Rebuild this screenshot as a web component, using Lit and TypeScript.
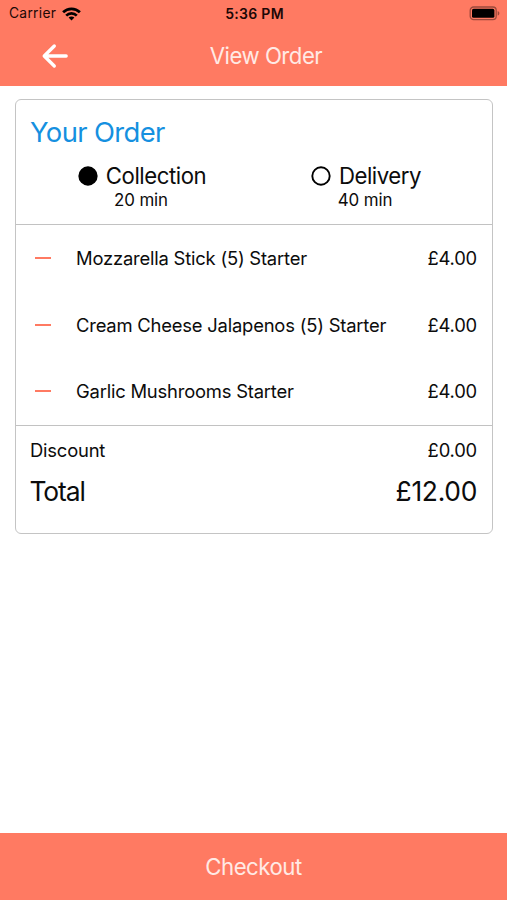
import { LitElement, html, css } from "lit";
import { customElement, property } from "lit/decorators.js";

interface OrderItem {
  name: string;
  price: string;
}

@customElement("status-bar")
class StatusBar extends LitElement {
  static styles = css`
    :host {
      display: grid;
      grid-template-columns: 1fr auto 1fr;
      align-items: center;
      height: 27px;
      padding: 0 7px 0 9px;
      color: #1c0806;
      font-size: 13.8px;
      line-height: 27px;
    }
    .left {
      display: flex;
      align-items: center;
      gap: 6px;
      letter-spacing: 0.28px;
    }
    .time {
      font-weight: 600;
      font-size: 14px;
      letter-spacing: 0.3px;
    }
    .battery {
      justify-self: end;
    }
    svg {
      display: block;
    }
  `;
  render() {
    return html`
      <div class="left">
        <span>Carrier</span>
        <svg width="19" height="14" viewBox="0 0 19 14">
          <g fill="none" stroke="#000" stroke-width="2.7">
            <path d="M1.1 5.3 C5.8 0.6 13.2 0.6 17.9 5.3" />
            <path d="M4.2 8.6 C7.2 5.7 11.8 5.7 14.8 8.6" />
          </g>
          <path d="M9.5 13.4 L6.6 10.5 C8.2 9 10.8 9 12.4 10.5 Z" fill="#000" />
        </svg>
      </div>
      <span class="time">5:36 PM</span>
      <svg class="battery" width="31" height="15" viewBox="0 0 31 15">
        <rect x="1.2" y="1" width="26" height="12.6" rx="3.4" fill="none" stroke="#9c4a3c" stroke-width="1.3" />
        <rect x="3" y="2.8" width="22.4" height="9" rx="1.6" fill="#000" />
        <path d="M28.7 5 C30.9 5.9 30.9 8.7 28.7 9.6 Z" fill="#9c4a3c" />
      </svg>
    `;
  }
}

@customElement("pickup-option")
class PickupOption extends LitElement {
  @property() label = "";
  @property() eta = "";
  @property({ type: Boolean }) selected = false;

  static styles = css`
    :host {
      display: flex;
      flex-direction: column;
      align-items: center;
    }
    .choice {
      display: flex;
      align-items: center;
      gap: 8px;
      font-size: 22.2px;
      line-height: 28px;
      letter-spacing: -0.45px;
    }
    svg {
      display: block;
    }
    .eta {
      padding-right: 2px;
      font-size: 16.9px;
      line-height: 20px;
      letter-spacing: -0.1px;
    }
  `;
  render() {
    return html`
      <div class="choice">
        <svg width="20" height="20" viewBox="0 0 20 20">
          <circle cx="10" cy="10" r="8.7" fill=${this.selected ? "#000" : "none"} stroke="#000" stroke-width="1.9" />
        </svg>
        <span>${this.label}</span>
      </div>
      <span class="eta">${this.eta}</span>
    `;
  }
}

@customElement("app-root")
class AppRoot extends LitElement {
  private items: OrderItem[] = [
    { name: "Mozzarella Stick (5) Starter", price: "£4.00" },
    { name: "Cream Cheese Jalapenos (5) Starter", price: "£4.00" },
    { name: "Garlic Mushrooms Starter", price: "£4.00" },
  ];

  static styles = css`
    :host {
      display: flex;
      flex-direction: column;
      box-sizing: border-box;
      width: 100%;
      height: 900px;
      background: #fff;
      color: #0c0c0c;
      font-family: Inter, "Liberation Sans", sans-serif;
    }
    header {
      flex: none;
      height: 86px;
      background: #ff7a62;
    }
    .nav {
      display: grid;
      grid-template-columns: 1fr auto 1fr;
      align-items: center;
      height: 58px;
      padding: 0 41px;
    }
    .back {
      display: block;
    }
    .title {
      color: #ffeae5;
      font-size: 22.2px;
      line-height: 28px;
      letter-spacing: -0.5px;
      padding-left: 25px;
    }
    .card {
      flex: none;
      box-sizing: border-box;
      height: 435px;
      margin: 13px 14px 0 15px;
      border: 1.4px solid #c4c4c4;
      border-radius: 6px;
    }
    .summary {
      box-sizing: border-box;
      height: 125px;
      border-bottom: 1px solid #c2c2c2;
      padding-top: 14px;
    }
    .heading {
      padding-left: 14px;
      color: #1590e0;
      font-size: 27.4px;
      line-height: 36px;
      letter-spacing: -0.62px;
    }
    .options {
      display: grid;
      grid-template-columns: 252px 196px;
      padding-top: 12px;
    }
    .items {
      box-sizing: border-box;
      height: 201px;
      border-bottom: 1px solid #c2c2c2;
    }
    .item {
      display: flex;
      align-items: center;
      height: 66.6px;
      padding: 0 15px 0 19px;
      font-size: 18.4px;
      letter-spacing: -0.2px;
    }
    .minus {
      width: 16px;
      height: 2px;
      margin-right: 25px;
      background: #ff7a62;
    }
    .name {
      flex: 1;
    }
    .line {
      display: flex;
      justify-content: space-between;
      padding: 0 15px 0 14px;
    }
    .discount {
      padding-top: 12px;
      font-size: 18.4px;
      line-height: 24px;
      letter-spacing: -0.2px;
    }
    .total {
      padding-top: 11px;
      font-size: 26.4px;
      line-height: 36px;
      letter-spacing: -0.3px;
    }
    .total span:first-child {
      margin-left: -0.5px;
      letter-spacing: -1.1px;
    }
    .checkout {
      display: flex;
      align-items: center;
      justify-content: center;
      height: 67px;
      margin: auto 0 0;
      padding: 0 0 1px;
      border: 0;
      background: #ff7a62;
      color: #ffeae5;
      font: inherit;
      font-size: 22.2px;
      letter-spacing: -0.5px;
    }
  `;

  render() {
    return html`
      <header>
        <status-bar></status-bar>
        <div class="nav">
          <svg class="back" width="28" height="26" viewBox="0 0 28 26">
            <path d="M13.3 3 L3.2 13 L13.3 23 M3.6 13 H25.2" fill="none" stroke="#fff" stroke-width="3.3" stroke-linecap="round" stroke-linejoin="round" />
          </svg>
          <span class="title">View Order</span>
        </div>
      </header>
      <section class="card">
        <div class="summary">
          <div class="heading">Your Order</div>
          <div class="options">
            <pickup-option label="Collection" eta="20 min" selected></pickup-option>
            <pickup-option label="Delivery" eta="40 min"></pickup-option>
          </div>
        </div>
        <div class="items">
          ${this.items.map(
            (item) => html`
              <div class="item">
                <span class="minus"></span>
                <span class="name">${item.name}</span>
                <span>${item.price}</span>
              </div>
            `,
          )}
        </div>
        <div class="line discount"><span>Discount</span><span>£0.00</span></div>
        <div class="line total"><span>Total</span><span>£12.00</span></div>
      </section>
      <button class="checkout">Checkout</button>
    `;
  }
}
